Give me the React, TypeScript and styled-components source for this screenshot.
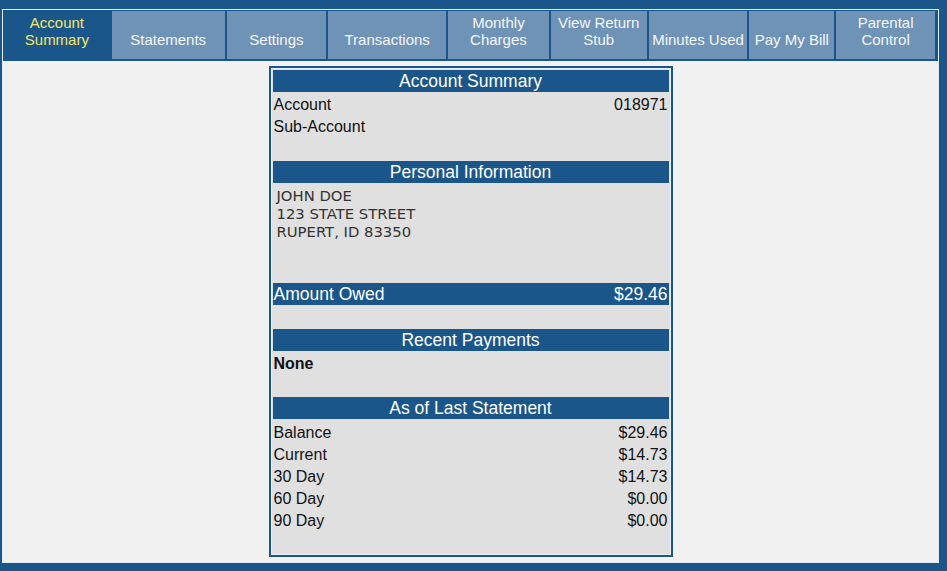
import styled, { createGlobalStyle } from 'styled-components';

const navy = '#1a5689';

const GlobalStyle = createGlobalStyle`
  html, body {
    margin: 0;
    padding: 0;
    height: 100%;
    background: ${navy};
    font-family: 'Liberation Sans', Arial, sans-serif;
  }
`;

const tabs = [
  { label: ['Account', 'Summary'], width: 106, active: true },
  { label: ['Statements'], width: 113 },
  { label: ['Settings'], width: 100 },
  { label: ['Transactions'], width: 118 },
  { label: ['Monthly', 'Charges'], width: 101 },
  { label: ['View Return', 'Stub'], width: 96 },
  { label: ['Minutes Used'], width: 99 },
  { label: ['Pay My Bill'], width: 85 },
  { label: ['Parental', 'Control'], width: 99 },
];

const aging = [
  ['Balance', '$29.46'],
  ['Current', '$14.73'],
  ['30 Day', '$14.73'],
  ['60 Day', '$0.00'],
  ['90 Day', '$0.00'],
];

const App = () => (
  <>
    <GlobalStyle />
    <Frame>
      <TabBar>
        {tabs.map((tab) => (
          <Tab key={tab.label.join(' ')} $active={!!tab.active} style={{ flexGrow: tab.width }}>
            {tab.label.map((line) => (
              <span key={line}>{line}</span>
            ))}
          </Tab>
        ))}
      </TabBar>
      <Content>
        <Card>
          <Header>Account Summary</Header>
          <Row>
            <span>Account</span>
            <span>018971</span>
          </Row>
          <Row>
            <span>Sub-Account</span>
          </Row>
          <Spacer $h={23} />
          <Header>Personal Information</Header>
          <Address>
            <div>JOHN DOE</div>
            <div>123 STATE STREET</div>
            <div>RUPERT, ID 83350</div>
          </Address>
          <TotalBar>
            <span>Amount Owed</span>
            <span>$29.46</span>
          </TotalBar>
          <Spacer $h={24} />
          <Header>Recent Payments</Header>
          <Row $bold>
            <span>None</span>
          </Row>
          <Spacer $h={22} />
          <Header $gap={3}>As of Last Statement</Header>
          {aging.map(([label, amount]) => (
            <Row key={label}>
              <span>{label}</span>
              <span>{amount}</span>
            </Row>
          ))}
          <Spacer $h={21} />
        </Card>
      </Content>
    </Frame>
  </>
);

const Frame = styled.div`
  margin: 9px 8px 0 2px;
  height: calc(100vh - 17px);
  border: 1px solid #e4ecf3;
  display: flex;
  flex-direction: column;
  box-sizing: border-box;
`;

const TabBar = styled.div`
  display: flex;
  gap: 2px;
  padding: 1px 3px 2px 1px;
  background: ${navy};
`;

const Tab = styled.div<{ $active: boolean }>`
  flex-basis: 0;
  height: 48px;
  box-sizing: border-box;
  display: flex;
  flex-direction: column;
  justify-content: flex-end;
  align-items: center;
  padding-bottom: 11px;
  font-size: 15px;
  line-height: 17px;
  white-space: nowrap;
  background: ${(p) => (p.$active ? navy : '#6f93b7')};
  color: ${(p) => (p.$active ? '#f3e56a' : '#f4f7fa')};
`;

const Content = styled.div`
  flex: 1;
  background: #f1f1f1;
  display: flex;
  justify-content: center;
  align-items: flex-start;
`;

const Card = styled.div`
  width: 404px;
  box-sizing: border-box;
  margin-top: 5px;
  border: 2px solid ${navy};
  padding: 2px;
  background: #e0e0e0;
  box-shadow: inset 0 0 0 1px #e9eef3;
  display: flex;
  flex-direction: column;
`;

const Header = styled.div<{ $gap?: number }>`
  height: 22px;
  line-height: 22px;
  margin-bottom: ${(p) => p.$gap ?? 2}px;
  background: ${navy};
  color: #fff;
  font-size: 17.5px;
  text-align: center;
`;

const Row = styled.div<{ $bold?: boolean }>`
  display: flex;
  justify-content: space-between;
  height: 22px;
  line-height: 22px;
  padding: 0 1px;
  font-size: 16px;
  color: #111;
  font-weight: ${(p) => (p.$bold ? 'bold' : 'normal')};
`;

const TotalBar = styled(Row)`
  background: ${navy};
  color: #fff;
  font-size: 17.5px;
`;

const Spacer = styled.div<{ $h: number }>`
  height: ${(p) => p.$h}px;
`;

const Address = styled.div`
  height: 100px;
  margin-top: -2px;
  box-sizing: border-box;
  padding: 4px 0 0 4px;
  font-family: 'DejaVu Sans', Verdana, sans-serif;
  font-size: 14.8px;
  line-height: 18px;
  color: #333;
`;

export default App;
